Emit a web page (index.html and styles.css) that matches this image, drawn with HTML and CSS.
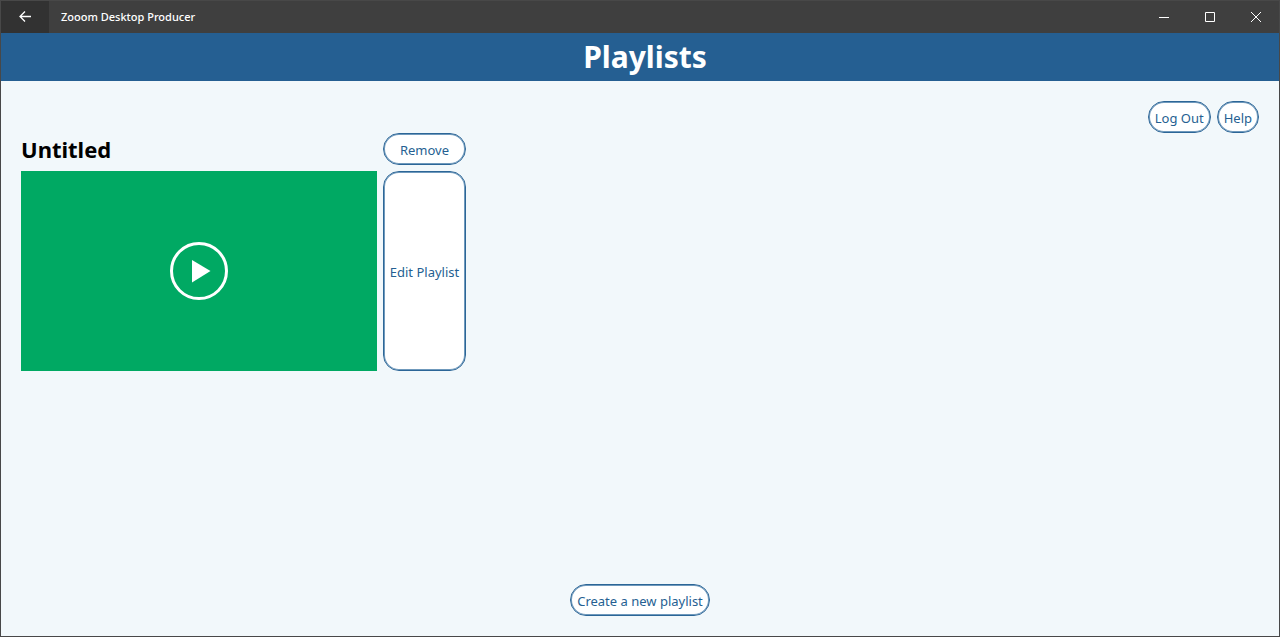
FILE: index.html
```html
<!DOCTYPE html>
<html lang="en">
<head>
<meta charset="utf-8">
<title>Zooom Desktop Producer</title>
<link rel="stylesheet" href="styles.css">
</head>
<body>
<div class="window">
  <div class="titlebar">
    <button class="back" type="button" aria-label="Back">
      <svg width="12" height="12" viewBox="0 0 12 12"><path d="M12 5.5H1M6 .5L1 5.5L6 10.5"/></svg>
    </button>
    <span class="app-name">Zooom Desktop Producer</span>
    <button class="caption" type="button" aria-label="Minimize">
      <svg width="10" height="10" viewBox="0 0 10 10"><path d="M0 5.5H10"/></svg>
    </button>
    <button class="caption" type="button" aria-label="Maximize">
      <svg width="10" height="10" viewBox="0 0 10 10"><path d="M.5 .5H9.5V9.5H.5Z"/></svg>
    </button>
    <button class="caption" type="button" aria-label="Close">
      <svg width="10" height="10" viewBox="0 0 10 10"><path d="M0 0L10 10M10 0L0 10"/></svg>
    </button>
  </div>
  <header class="header"><h1>Playlists</h1></header>
  <main class="content">
    <nav class="actions">
      <button class="pill" type="button">Log Out</button>
      <button class="pill" type="button">Help</button>
    </nav>
    <section class="playlist">
      <h2>Untitled</h2>
      <button class="pill" type="button">Remove</button>
      <button class="preview" type="button" aria-label="Play Untitled">
        <svg width="60" height="60" viewBox="0 0 60 60"><circle cx="30" cy="30" r="27.5"/><path d="M23 19L41.5 30L23 41.5Z"/></svg>
      </button>
      <button class="pill" type="button">Edit Playlist</button>
    </section>
    <footer class="footer">
      <button class="pill" type="button">Create a new playlist</button>
    </footer>
  </main>
</div>
</body>
</html>
```
FILE: styles.css
```css
* {
  box-sizing: border-box;
}

body {
  margin: 0;
  font-family: "Noto Sans", "Open Sans", sans-serif;
}

button {
  font-family: inherit;
  cursor: pointer;
}

h1,
h2 {
  margin: 0;
  font-weight: 700;
}

.window {
  display: flex;
  flex-direction: column;
  min-height: 100vh;
  border: 1px solid #484848;
  background: #f2f8fb;
}

.titlebar {
  display: flex;
  height: 32px;
  background: #3f3f3f;
  color: #fff;
}

.back,
.caption {
  display: flex;
  align-items: center;
  justify-content: center;
  padding: 0;
  border: 0;
  background: transparent;
}

.back {
  width: 48px;
  background: #323232;
}

.caption {
  width: 46px;
}

.back svg,
.caption svg {
  fill: none;
  stroke: #fff;
  stroke-width: 1;
}

.back svg {
  stroke-width: 1.3;
}

.app-name {
  flex: 1;
  padding-left: 12px;
  font-size: 11px;
  font-weight: 500;
  line-height: 32px;
}

.header {
  padding-left: 10px;
  background: #255f92;
  color: #fff;
  text-align: center;
}

.header h1 {
  font-size: 30px;
  line-height: 48px;
}

.content {
  display: flex;
  flex: 1;
  flex-direction: column;
  padding: 20px;
}

.actions {
  display: flex;
  justify-content: flex-end;
  gap: 6px;
}

.pill {
  min-height: 32px;
  padding: 2px 6px 0;
  border: 1px solid #2c6697;
  border-radius: 16px;
  background: #fff;
  box-shadow: inset 0 0 0 1px #6f99bc;
  color: #255f92;
  font-size: 13px;
  line-height: 20px;
  white-space: nowrap;
}

.playlist {
  display: grid;
  grid-template-columns: 356px 83px;
  grid-template-rows: 32px 200px;
  gap: 6px;
}

.playlist .pill {
  padding-inline: 0;
}

.playlist h2 {
  font-size: 22px;
  line-height: 32px;
}

.preview {
  display: flex;
  align-items: center;
  justify-content: center;
  padding: 0;
  border: 0;
  background: #00a963;
}

.preview circle {
  fill: none;
  stroke: #fff;
  stroke-width: 3;
}

.preview path {
  fill: #fff;
}

.footer {
  display: flex;
  justify-content: center;
  margin-top: auto;
}
```
